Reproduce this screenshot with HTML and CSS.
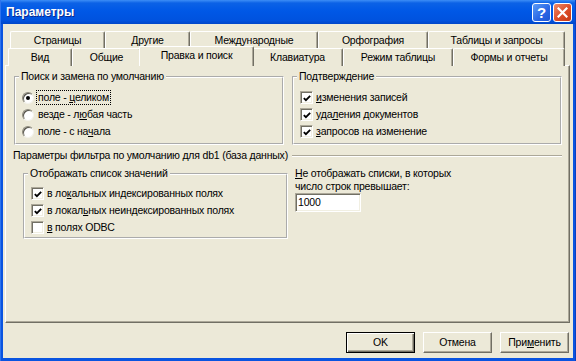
FILE: index.html
```html
<!DOCTYPE html>
<html>
<head>
  <meta charset="utf-8">
  <title>Параметры</title>
  <link rel="stylesheet" href="styles.css">
</head>
<body>
<div class="window">
  <div class="titlebar">
    <span class="title">Параметры</span>
    <span class="cbtn help">?</span>
    <span class="cbtn close">
      <svg width="11" height="11" viewBox="0 0 11 11"><path d="M1.5 1.5 L9.5 9.5 M9.5 1.5 L1.5 9.5" stroke="#fff" stroke-width="2.2" stroke-linecap="square"/></svg>
    </span>
  </div>

  <div class="main">
    <div class="tabrow back">
      <div class="tab w95">Страницы</div>
      <div class="tab w85">Другие</div>
      <div class="tab w128">Международные</div>
      <div class="tab w110">Орфография</div>
      <div class="tab w137">Таблицы и запросы</div>
    </div>
    <div class="tabrow front">
      <div class="tab w64">Вид</div>
      <div class="tab w69">Общие</div>
      <div class="tab active">Правка и поиск</div>
      <div class="tab w91">Клавиатура</div>
      <div class="tab w110">Режим таблицы</div>
      <div class="tab w112">Формы и отчеты</div>
    </div>

    <div class="panel">
      <div class="row-top">
        <fieldset class="group g-search">
          <legend>Поиск и замена по умолчанию</legend>
          <div class="opt"><span class="radio on"></span><span class="focus">поле - <u>ц</u>еликом</span></div>
          <div class="opt"><span class="radio"></span><span>везде - л<u>ю</u>бая часть</span></div>
          <div class="opt"><span class="radio"></span><span>поле - с на<u>ч</u>ала</span></div>
        </fieldset>
        <fieldset class="group g-confirm">
          <legend>Подтверждение</legend>
          <div class="opt"><span class="check on"><svg width="11" height="11" viewBox="0 0 11 11"><path d="M2 5 L4.3 7.3 L9 2.6" stroke="#000" stroke-width="2" fill="none"/></svg></span><span><u>и</u>зменения записей</span></div>
          <div class="opt"><span class="check on"><svg width="11" height="11" viewBox="0 0 11 11"><path d="M2 5 L4.3 7.3 L9 2.6" stroke="#000" stroke-width="2" fill="none"/></svg></span><span>уда<u>л</u>ения документов</span></div>
          <div class="opt"><span class="check on"><svg width="11" height="11" viewBox="0 0 11 11"><path d="M2 5 L4.3 7.3 L9 2.6" stroke="#000" stroke-width="2" fill="none"/></svg></span><span><u>з</u>апросов на изменение</span></div>
        </fieldset>
      </div>

      <div class="sep"><span>Параметры фильтра по умолчанию для db1 (база данных)</span><span class="sep-line"></span></div>

      <div class="row-filter">
        <fieldset class="group g-list">
          <legend>Отображать список значений</legend>
          <div class="opt"><span class="check on"><svg width="11" height="11" viewBox="0 0 11 11"><path d="M2 5 L4.3 7.3 L9 2.6" stroke="#000" stroke-width="2" fill="none"/></svg></span><span>в ло<u>к</u>альных индексированных полях</span></div>
          <div class="opt"><span class="check on"><svg width="11" height="11" viewBox="0 0 11 11"><path d="M2 5 L4.3 7.3 L9 2.6" stroke="#000" stroke-width="2" fill="none"/></svg></span><span>в локал<u>ь</u>ных неиндексированных полях</span></div>
          <div class="opt"><span class="check"></span><span><u>в</u> полях ODBC</span></div>
        </fieldset>
        <div class="limit">
          <div class="limit-text"><u>Н</u>е отображать списки, в которых<br>число строк превышает:</div>
          <div class="field">1000</div>
        </div>
      </div>
    </div>

    <div class="buttons">
      <div class="btn default">OK</div>
      <div class="btn">Отмена</div>
      <div class="btn">При<u>м</u>енить</div>
    </div>
  </div>
</div>
</body>
</html>
```

FILE: styles.css
```css
*{
  box-sizing: border-box;
}
body{
  margin: 0;
  font-family: "Liberation Sans", Arial, sans-serif;
  font-size: 10.5px;
  letter-spacing: -0.2px;
  line-height: 13px;
  color: #000;
}
.window{
  width: 576px;
  height: 361px;
  display: flex;
  flex-direction: column;
  background: #0a54e0;
  border-left: 1px solid #2d73ee;
  border-right: 1px solid #0a3fc0;
}

/* заголовок окна */
.titlebar{
  height: 24px;
  display: flex;
  align-items: center;
  padding: 0 3px 0 5px;
  background: linear-gradient(#3d8ef6 0, #0c62e6 3px, #0058e6 45%, #0052de 85%, #0046c8 100%);
}
.title{
  flex: 1;
  color: #fff;
  font-weight: bold;
  font-size: 12px;
  letter-spacing: 0;
  text-shadow: 1px 1px 0 #0b2a8e;
}
.cbtn{
  width: 19px;
  height: 19px;
  margin-left: 2px;
  border: 1px solid #fff;
  border-radius: 3px;
  display: flex;
  align-items: center;
  justify-content: center;
}
.help{
  background: linear-gradient(135deg, #5a9cf7, #2a66e4 60%, #1d55d4);
  color: #fff;
  font-weight: bold;
  font-size: 15px;
}
.close{
  background: linear-gradient(135deg, #ee8a6a, #dc4d28 55%, #c53a17);
}

.main{
  flex: 1;
  margin: 0 2px 3px;
  background: #ece9d8;
  padding: 7px 4px 0 0;
}

/* вкладки */
.tabrow{
  display: flex;
  height: 17px;
}
.tabrow.back{
  margin-left: 7px;
}
.tabrow.front{
  margin-left: 5px;
}
.tab{
  height: 18px;
  background: #ece9d8;
  border-top: 1px solid #fff;
  border-left: 1px solid #fff;
  border-right: 1px solid #716f64;
  box-shadow: inset -1px 0 0 #aca899;
  border-radius: 2px 2px 0 0;
  text-align: center;
  padding-top: 2px;
  white-space: nowrap;
}
.w64{ width: 64px; }
.w69{ width: 69px; }
.w85{ width: 85px; }
.w91{ width: 91px; }
.w95{ width: 95px; }
.w110{ width: 110px; }
.w112{ width: 112px; }
.w128{ width: 128px; }
.w137{ width: 137px; }
.tab.active{
  width: 115px;
  height: 20px;
  margin: -2px -2px 0;
  padding-top: 2px;
  position: relative;
  z-index: 1;
}

.panel{
  margin-left: 2px;
  width: 565px;
  height: 258px;
  border-top: 1px solid #fff;
  border-left: 1px solid #fff;
  border-right: 1px solid #716f64;
  border-bottom: 1px solid #716f64;
  box-shadow: inset -1px -1px 0 #aca899;
  padding-top: 4px;
}

/* группы */
.group{
  margin: 0;
  min-width: 0;
  border: 2px groove #fff;
  padding: 6px 6px 3px;
}
.group legend{
  padding: 0 2px;
  margin-left: -3px;
  line-height: 13px;
}
.row-top{
  display: flex;
  align-items: flex-start;
  gap: 8px;
  padding-left: 8px;
}
.g-search{ width: 270px; }
.g-confirm{ width: 270px; }

.opt{
  height: 17px;
  display: flex;
  align-items: center;
  white-space: nowrap;
}
.radio{
  width: 12px;
  height: 12px;
  margin-right: 4px;
  border-radius: 50%;
  background: #fff;
  border: 1px solid;
  border-color: #8d8a7c #f4f3ee #f4f3ee #8d8a7c;
  box-shadow: inset 1px 1px 0 #55534a;
  display: flex;
  align-items: center;
  justify-content: center;
}
.radio.on::after{
  content: "";
  width: 4px;
  height: 4px;
  border-radius: 50%;
  background: #000;
}
.focus{
  outline: 1px dotted #000;
  padding: 0 1px;
  margin-left: -1px;
  line-height: 13px;
}
.check{
  width: 13px;
  height: 13px;
  margin-right: 3px;
  background: #fff;
  border: 1px solid;
  border-color: #aca899 #fff #fff #aca899;
  box-shadow: inset 1px 1px 0 #716f64, inset -1px -1px 0 #f1efe2;
  display: flex;
  align-items: center;
  justify-content: center;
}
.check svg{
  display: block;
  margin: 1px 0 0 1px;
}

.sep{
  display: flex;
  align-items: center;
  margin: 4px 7px 0 7px;
  height: 13px;
  white-space: nowrap;
}
.sep-line{
  flex: 1;
  margin-left: 4px;
  border-top: 1px solid #aca899;
  border-bottom: 1px solid #fff;
}

.row-filter{
  display: flex;
  align-items: flex-start;
  margin-top: 5px;
  padding-left: 17px;
}
.g-list{
  width: 265px;
  padding: 5px 6px 1px;
}
.limit{
  margin-left: 7px;
}
.field{
  width: 66px;
  height: 19px;
  background: #fff;
  border: 1px solid;
  border-color: #aca899 #fff #fff #aca899;
  box-shadow: inset 1px 1px 0 #716f64, inset -1px -1px 0 #f1efe2;
  padding: 2px 0 0 2px;
}

/* кнопки */
.buttons{
  display: flex;
  justify-content: flex-end;
  gap: 8px;
  margin-top: 9px;
}
.btn{
  width: 69px;
  height: 21px;
  border: 1px solid;
  border-color: #fff #716f64 #716f64 #fff;
  box-shadow: inset -1px -1px 0 #aca899;
  display: flex;
  align-items: center;
  justify-content: center;
}
.btn.default{
  border-color: #000;
  box-shadow: inset 1px 1px 0 #fff, inset -1px -1px 0 #716f64, inset -2px -2px 0 #aca899;
}
```
